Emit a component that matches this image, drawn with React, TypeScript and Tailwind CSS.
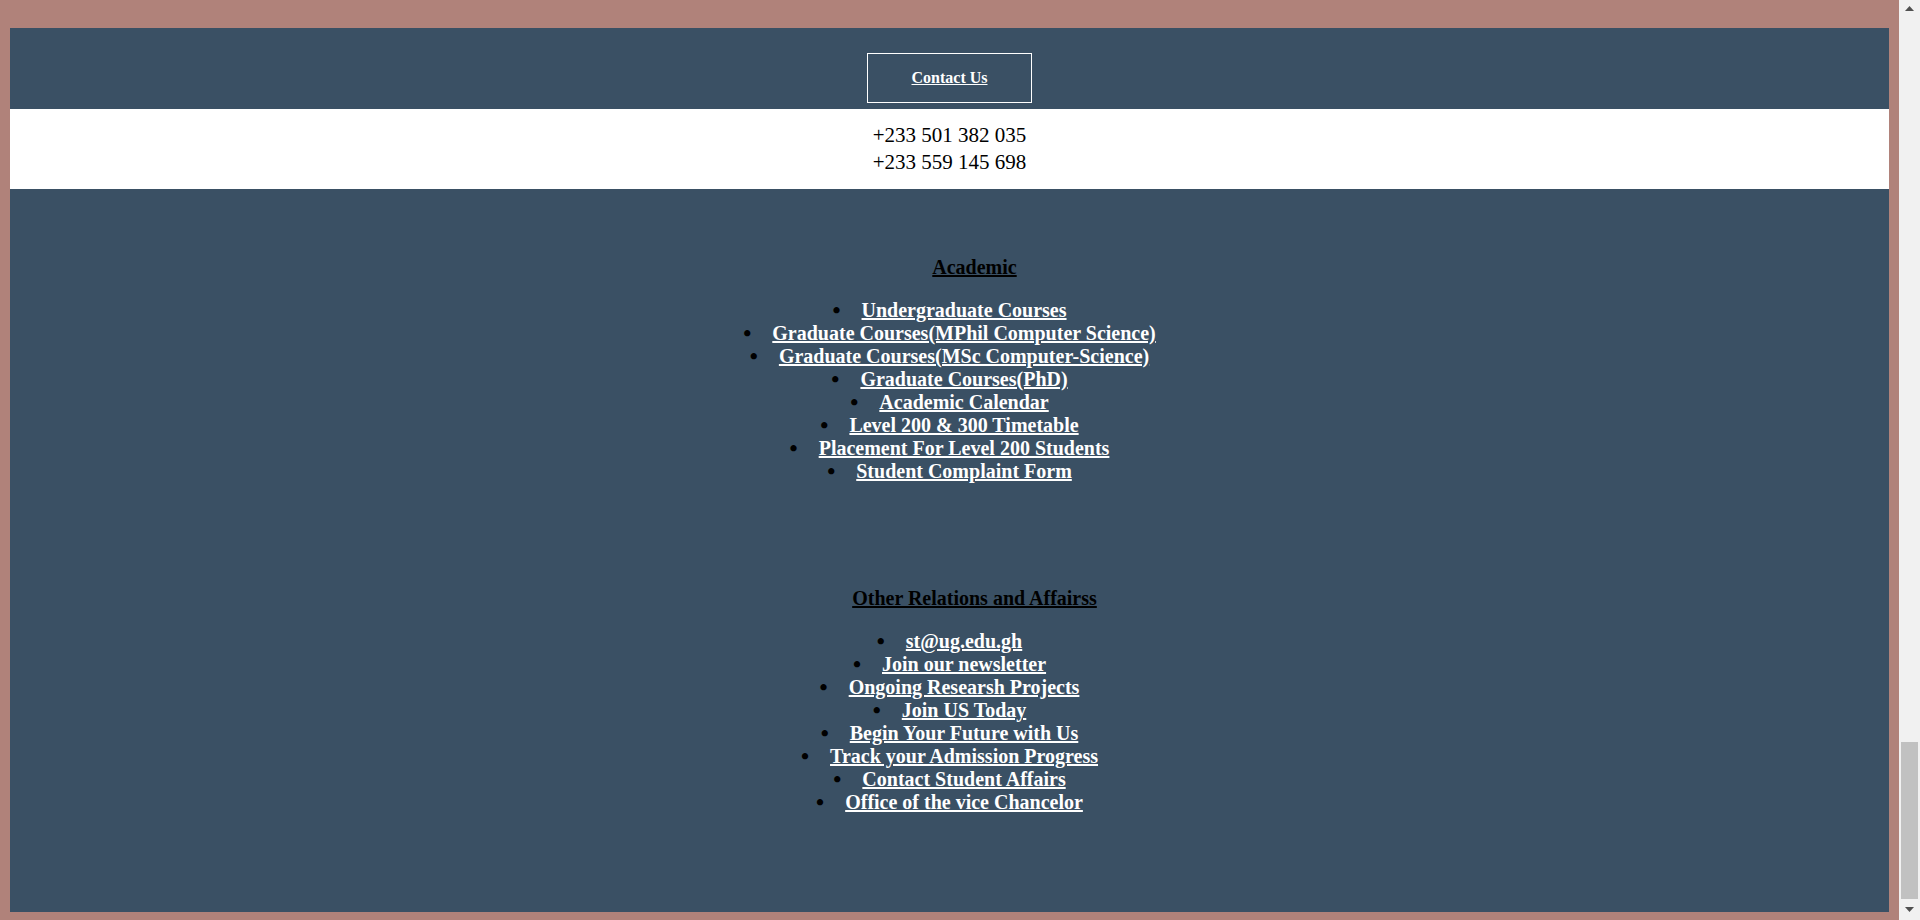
import React from 'react';

const ACADEMIC_LINKS = [
  'Undergraduate Courses',
  'Graduate Courses(MPhil Computer Science)',
  'Graduate Courses(MSc Computer-Science)',
  'Graduate Courses(PhD)',
  'Academic Calendar',
  'Level 200 & 300 Timetable',
  'Placement For Level 200 Students',
  'Student Complaint Form',
];

const OTHER_LINKS = [
  'st@ug.edu.gh',
  'Join our newsletter',
  'Ongoing Researsh Projects',
  'Join US Today',
  'Begin Your Future with Us',
  'Track your Admission Progress',
  'Contact Student Affairs',
  'Office of the vice Chancelor',
];

function LinkList({ title, links }: { title: string; links: string[] }) {
  return (
    <div className="flex flex-col items-center">
      {/* heading sits a little right of the list centre */}
      <h4 className="pl-[50px] text-[20px] leading-[23px] font-bold text-black underline">
        {title}
      </h4>
      <ul className="mt-[20px] flex flex-col items-center">
        {links.map((link) => (
          <li key={link} className="flex items-center text-[20px] leading-[23px] font-bold">
            <span className="text-black text-[23px] leading-[23px] mr-[21px]">•</span>
            <a href="#" className="text-white underline">
              {link}
            </a>
          </li>
        ))}
      </ul>
    </div>
  );
}

function Scrollbar() {
  return (
    <div className="w-[21px] h-full bg-[#f1f1f1] flex flex-col shrink-0">
      <div className="h-[21px] flex items-start justify-center pt-[6px]">
        <svg width="9" height="5" viewBox="0 0 9 5">
          <path d="M4.5 0 L9 5 L0 5 Z" fill="#505050" />
        </svg>
      </div>
      <div className="flex-1 flex flex-col justify-end px-[2px]">
        <div className="h-[157px] bg-[#c1c1c1]" />
      </div>
      <div className="h-[21px] flex items-start justify-center pt-[8px]">
        <svg width="9" height="5" viewBox="0 0 9 5">
          <path d="M0 0 L9 0 L4.5 5 Z" fill="#505050" />
        </svg>
      </div>
    </div>
  );
}

export default function App() {
  return (
    <div className="flex w-full h-[920px] overflow-hidden font-['Liberation_Serif',serif]">
      <main className="flex-1 bg-[#b0827a] pt-[28px] px-[10px] pb-[8px] flex flex-col">

        {/* CONTACT BUTTON */}
        <section className="h-[81px] bg-[#3a5064] flex justify-center pt-[25px]">
          <div className="w-[165px] h-[50px] border border-white flex items-center justify-center">
            <a href="#" className="text-white text-[16px] font-bold underline">
              Contact Us
            </a>
          </div>
        </section>

        {/* PHONES */}
        <section className="h-[80px] bg-white pt-[13px] text-center text-black text-[21px] leading-[27px]">
          <p>+233 501 382 035</p>
          <p>+233 559 145 698</p>
        </section>

        {/* LINKS */}
        <section className="flex-1 bg-[#3a5064] pt-[67px] flex flex-col gap-[104px]">
          <LinkList title="Academic" links={ACADEMIC_LINKS} />
          <LinkList title="Other Relations and Affairss" links={OTHER_LINKS} />
        </section>

      </main>
      <Scrollbar />
    </div>
  );
}
